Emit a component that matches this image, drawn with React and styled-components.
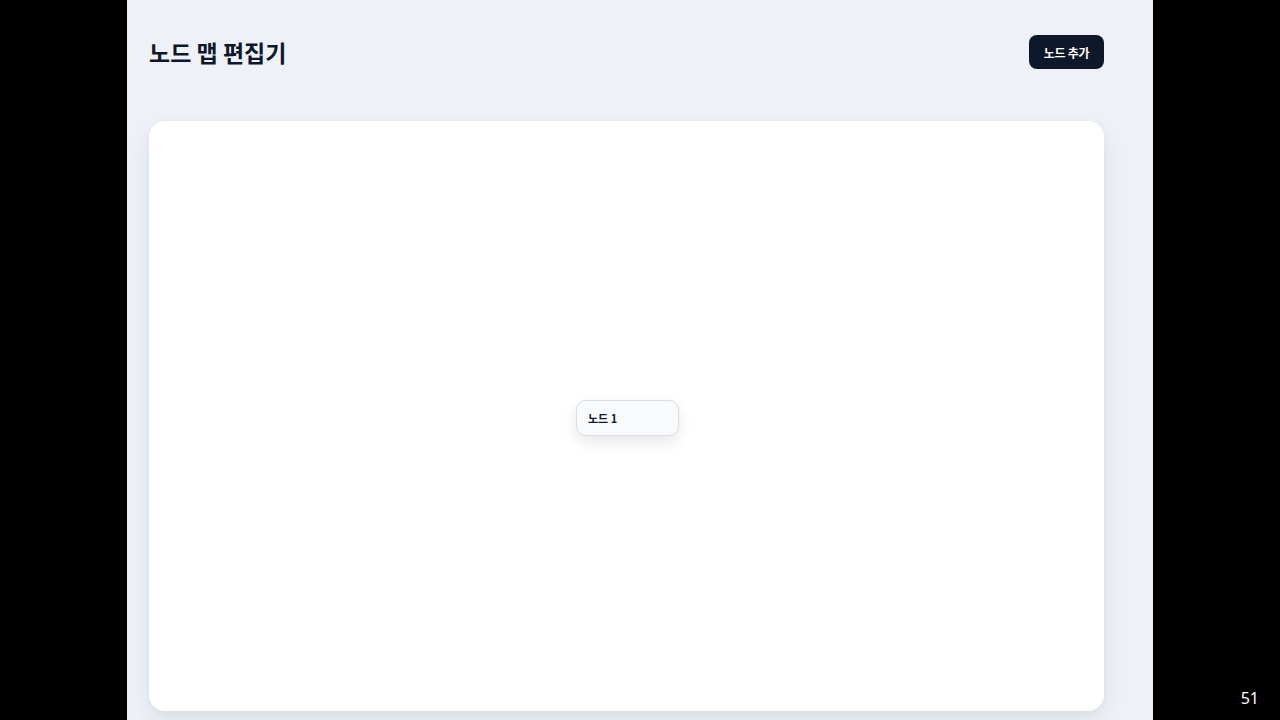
import styled, { createGlobalStyle } from "styled-components";

const GlobalStyle = createGlobalStyle`
  * {
    box-sizing: border-box;
  }
  html, body {
    margin: 0;
    padding: 0;
    background: #000;
  }
  body {
    font-family: "Inter", "Noto Sans CJK KR", sans-serif;
  }
`;

const Screen = styled.div`
  position: relative;
  width: 1280px;
  height: 720px;
  display: flex;
  justify-content: center;
  background: #000;
  overflow: hidden;
`;

const Page = styled.div`
  width: 1026px;
  height: 720px;
  background: #eef2f8;
  padding: 35px 49px 0 22px;
  display: flex;
  flex-direction: column;
  gap: 52px;
`;

const Header = styled.header`
  height: 34px;
  display: flex;
  align-items: center;
  justify-content: space-between;
`;

const Title = styled.h1`
  margin: 0;
  font-family: "Noto Sans CJK KR", sans-serif;
  font-size: 23px;
  font-weight: 700;
  color: #0f172a;
  letter-spacing: 0;
`;

const AddButton = styled.button`
  height: 34px;
  width: 75px;
  border: none;
  border-radius: 8px;
  background: #0f172a;
  color: #fff;
  font-family: "Noto Sans CJK KR", sans-serif;
  font-size: 12px;
  font-weight: 700;
  letter-spacing: -0.3px;
  cursor: pointer;
`;

const Canvas = styled.div`
  position: relative;
  height: 590px;
  background: #fff;
  border-radius: 16px;
  box-shadow: 0 10px 25px rgba(15, 23, 42, 0.08), 0 2px 6px rgba(15, 23, 42, 0.04);
`;

const Node = styled.div`
  position: absolute;
  width: 103px;
  height: 36px;
  display: flex;
  align-items: center;
  padding: 0 11px;
  background: #f8fafc;
  border: 1px solid #d7dde6;
  border-radius: 10px;
  box-shadow: 0 6px 14px rgba(15, 23, 42, 0.1);
  font-family: "Noto Sans CJK KR", sans-serif;
  font-size: 11px;
  font-weight: 700;
  color: #0f172a;
  cursor: grab;
`;

const PageNumber = styled.div`
  position: absolute;
  right: 21px;
  bottom: 11px;
  color: #fff;
  font-family: "Noto Sans", sans-serif;
  font-size: 16px;
`;

const nodes = [{ id: 1, label: "노드 1", x: 427, y: 279 }];

export default function App() {
  return (
    <>
      <GlobalStyle />
      <Screen>
        <Page>
          <Header>
            <Title>노드 맵 편집기</Title>
            <AddButton>노드 추가</AddButton>
          </Header>
          <Canvas>
            {nodes.map((n) => (
              <Node key={n.id} style={{ left: n.x, top: n.y }}>
                {n.label}
              </Node>
            ))}
          </Canvas>
        </Page>
        <PageNumber>51</PageNumber>
      </Screen>
    </>
  );
}
